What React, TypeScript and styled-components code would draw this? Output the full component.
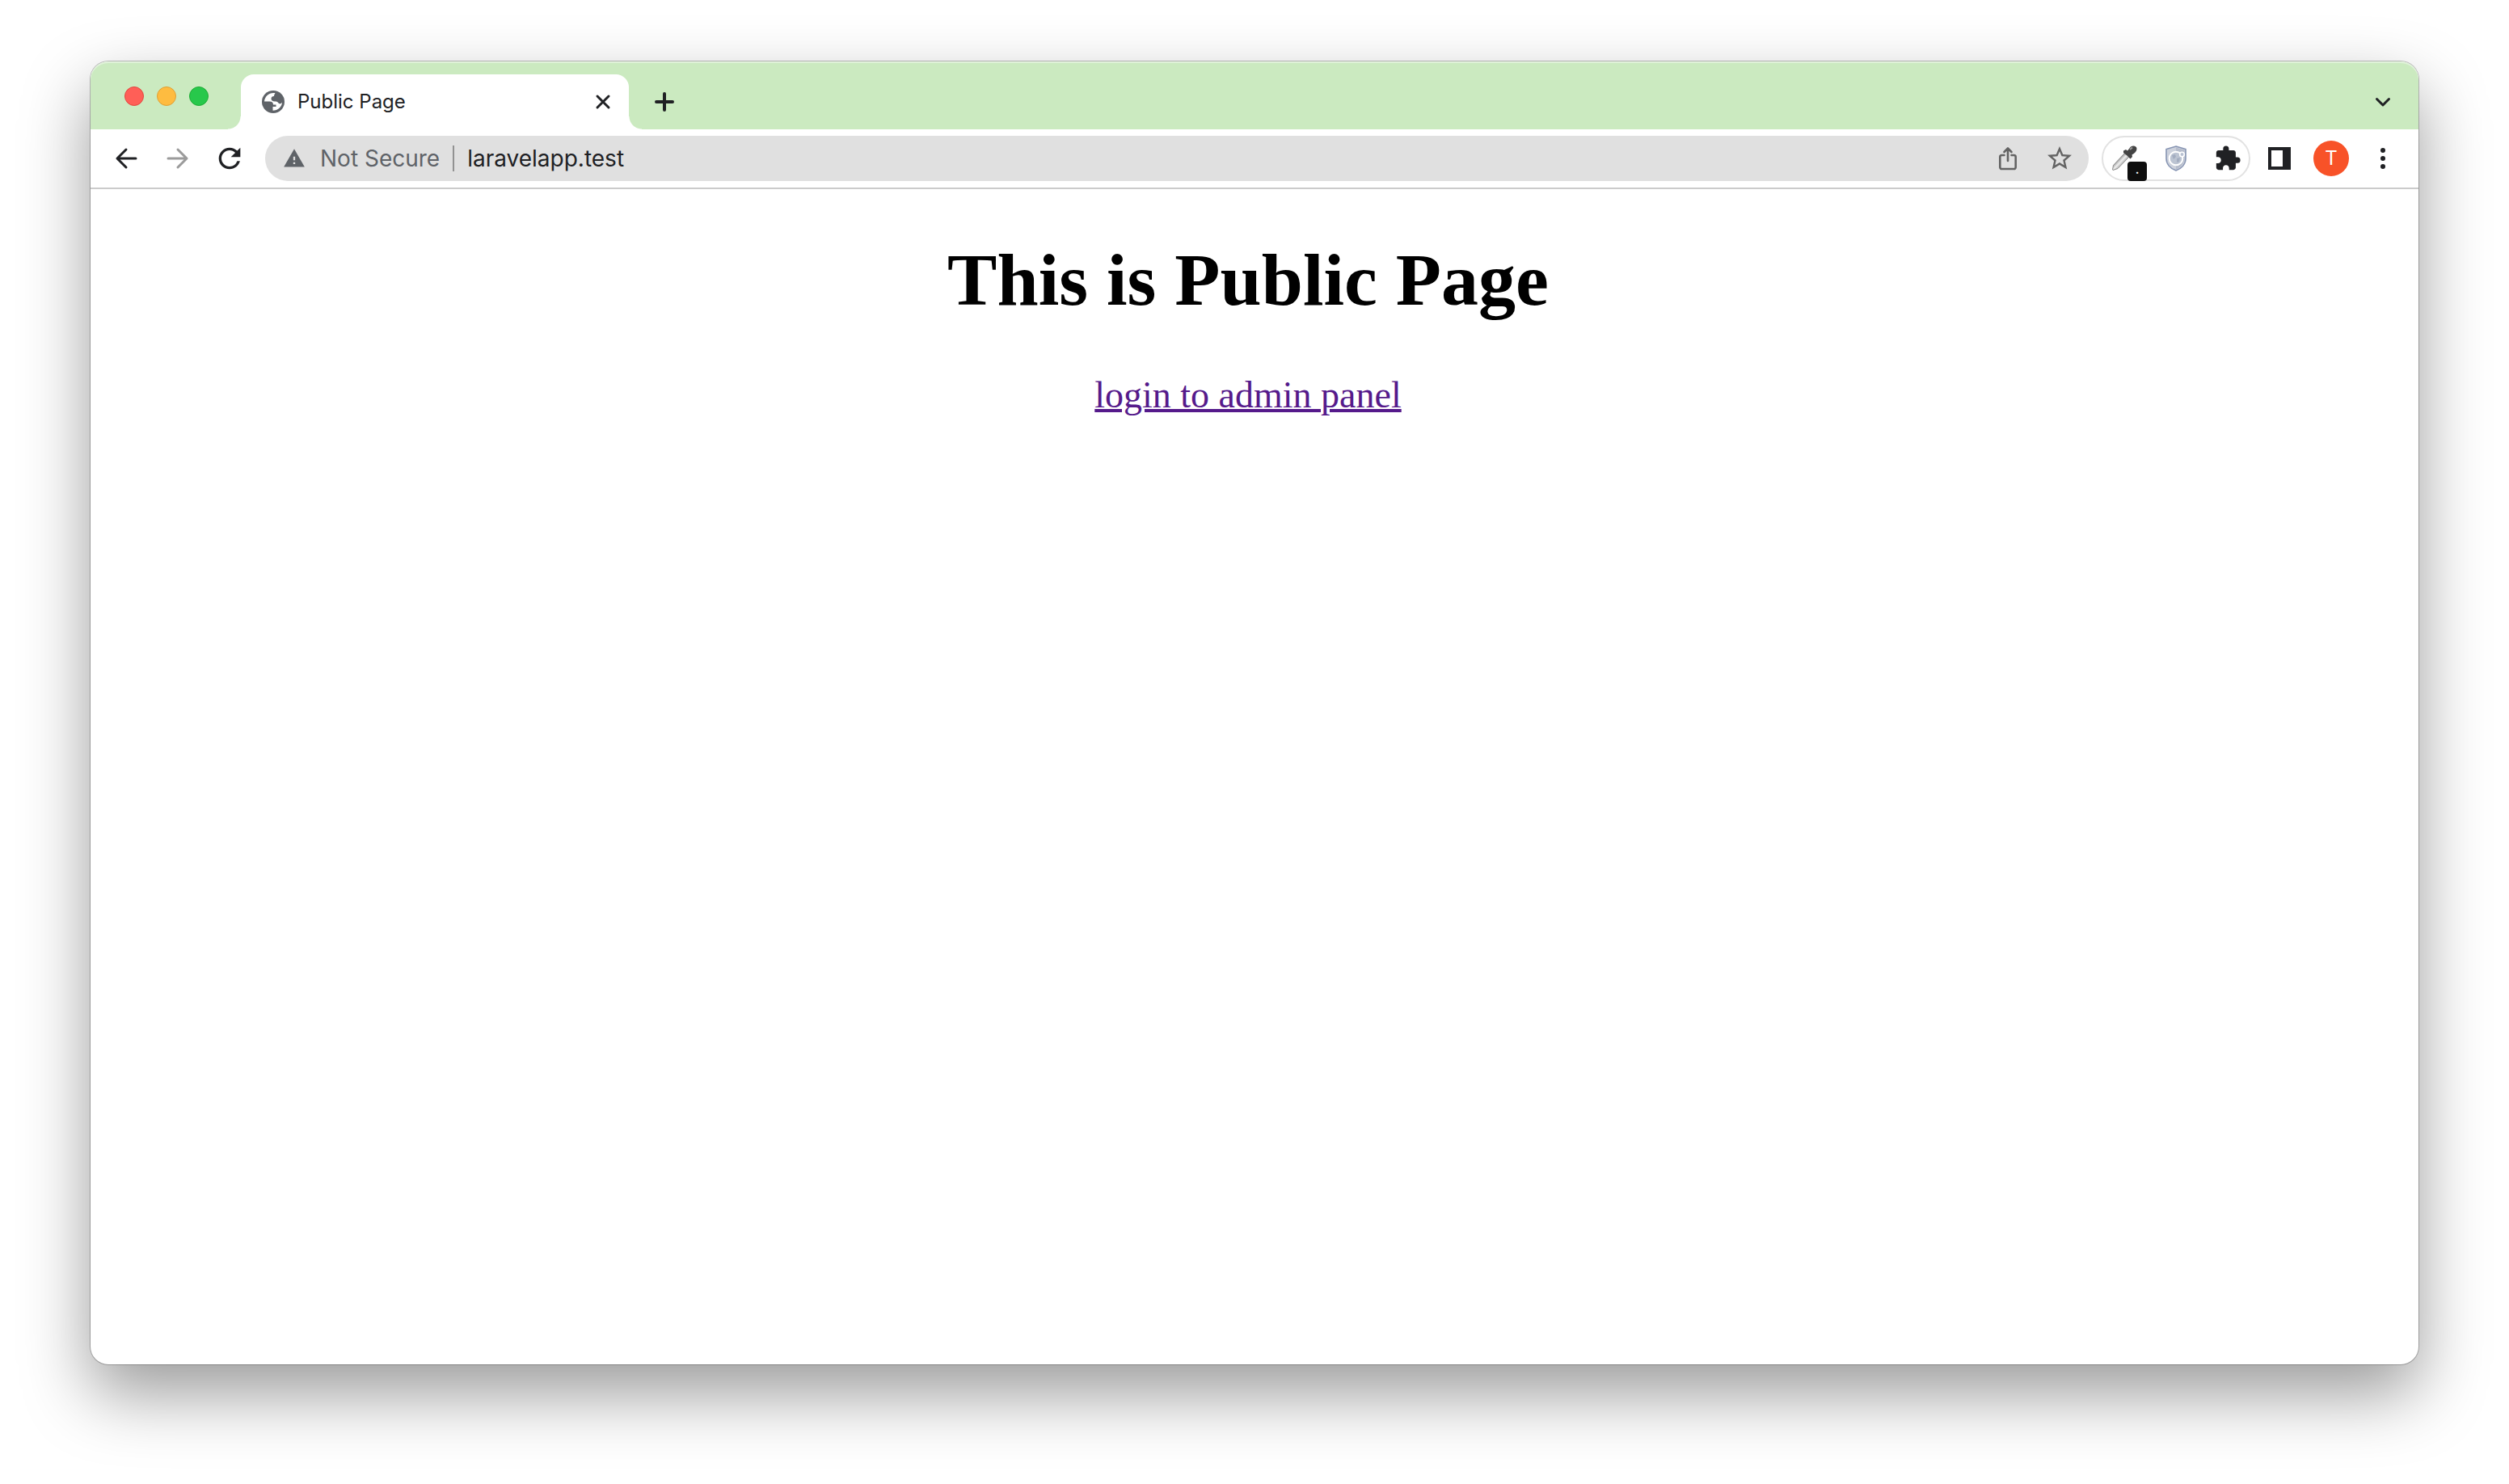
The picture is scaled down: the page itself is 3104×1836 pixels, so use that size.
import React from 'react';
import styled, { createGlobalStyle } from 'styled-components';
import { MdExtension, MdStarBorder, MdWarning, MdRefresh } from 'react-icons/md';

const ink = '#202124';
const muted = '#5f6368';
const frame = '#cbeac0';
const sans = "Inter, 'Liberation Sans', sans-serif";

const GlobalStyle = createGlobalStyle`
  * { box-sizing: border-box; }
  body { margin: 0; background: #fff; }
  button, input { font: inherit; color: inherit; border: 0; margin: 0; padding: 0; background: none; }
  svg { display: block; flex: none; }
`;

const Desktop = styled.div`
  display: flex;
  min-height: 100vh;
  padding: 76px 112px 148px;
`;

const Window = styled.div`
  flex: 1;
  min-width: 0;
  display: flex;
  flex-direction: column;
  border-radius: 22px;
  background: #fff;
  box-shadow: 0 0 0 1px rgba(0, 0, 0, 0.24), 0 36px 84px rgba(0, 0, 0, 0.4);
  font-family: ${sans};
`;

const TabStrip = styled.header`
  display: flex;
  align-items: flex-end;
  height: 84px;
  padding: 0 4px 0 42px;
  border-radius: 22px 22px 0 0;
  background: ${frame};
  box-shadow: inset 0 2px 0 rgba(255, 255, 255, 0.4);
  color: ${ink};
`;

const Lights = styled.div`
  display: flex;
  align-items: center;
  gap: 16px;
  width: 144px;
  height: 82px;
`;

const Light = styled.button<{ $fill: string; $edge: string }>`
  width: 24px;
  height: 24px;
  border-radius: 50%;
  background: ${(p) => p.$fill};
  border: 1px solid ${(p) => p.$edge};
`;

const Tab = styled.div`
  position: relative;
  display: flex;
  align-items: center;
  width: 480px;
  height: 68px;
  padding: 0 16px 0 26px;
  border-radius: 16px 16px 0 0;
  background: #fff;
  font-size: 24px;
  line-height: 32px;

  &::before,
  &::after {
    content: '';
    position: absolute;
    bottom: 0;
    width: 16px;
    height: 16px;
  }
  &::before {
    right: 100%;
    background: radial-gradient(circle at 0 0, transparent 15px, #fff 16px);
  }
  &::after {
    left: 100%;
    background: radial-gradient(circle at 100% 0, transparent 15px, #fff 16px);
  }
`;

const TabTitle = styled.span`
  flex: 1;
  padding-left: 16px;
`;

const IconButton = styled.button<{ $size?: number; $dim?: boolean }>`
  display: flex;
  flex: none;
  align-items: center;
  justify-content: center;
  width: ${(p) => p.$size ?? 64}px;
  height: ${(p) => p.$size ?? 64}px;
  color: ${(p) => (p.$dim ? '#9b9b9b' : ink)};
`;

const StripActions = styled.div`
  flex: 1;
  display: flex;
  justify-content: space-between;
  align-items: center;
  height: 68px;
  padding: 0 12px;
`;

const Toolbar = styled.nav`
  display: flex;
  align-items: center;
  height: 74px;
  padding: 0 12px;
  border-bottom: 2px solid #cbcbcb;
`;

const AddressBar = styled.div`
  flex: 1;
  display: flex;
  align-items: center;
  height: 56px;
  margin: 0 16px 0 12px;
  padding: 0 4px 0 22px;
  border-radius: 28px;
  background: #e0e0e0;
  font-size: 28px;
  line-height: 36px;
`;

const Security = styled.button`
  display: flex;
  align-items: center;
  gap: 18px;
  padding-right: 16px;
  color: ${muted};
`;

const Divider = styled.span`
  width: 2px;
  height: 32px;
  background: #929292;
`;

const Address = styled.input`
  flex: 1;
  min-width: 0;
  height: 40px;
  padding: 0 16px;
  color: ${ink};
`;

const Extensions = styled.div`
  display: flex;
  align-items: center;
  justify-content: center;
  width: 184px;
  height: 56px;
  margin-right: 4px;
  border: 2px solid #e2e2e2;
  border-radius: 28px;
`;

const ExtensionButton = styled(IconButton)`
  position: relative;
  height: 52px;
`;

const Badge = styled.span`
  position: absolute;
  right: 4px;
  bottom: -2px;
  width: 24px;
  height: 24px;
  border-radius: 4px;
  background: #0e0e0e;
  color: #fff;
  font-size: 18px;
  line-height: 18px;
  text-align: center;
`;

const Avatar = styled.span`
  width: 44px;
  height: 44px;
  border-radius: 50%;
  background: #f85228;
  color: #fff;
  font-size: 24px;
  line-height: 44px;
  text-align: center;
`;

const Page = styled.main`
  display: flex;
  flex-direction: column;
  align-items: center;
  gap: 60px;
  padding: 57px 16px 56px 0;
  font-family: 'Liberation Serif', serif;
`;

const Heading = styled.h1`
  margin: 0;
  color: #000;
  font-size: 92px;
  font-weight: 700;
  line-height: 110px;
`;

const LoginLink = styled.a`
  color: #551a8b;
  font-size: 46px;
  line-height: 56px;
  text-decoration: underline;
  text-decoration-thickness: 4px;
`;

const Stroke = ({ d, size, width = 3 }: { d: string; size: number; width?: number }) => (
  <svg width={size} height={size} viewBox={`0 0 ${size} ${size}`} fill="none" stroke="currentColor" strokeWidth={width} strokeLinecap="round" strokeLinejoin="round" aria-hidden="true">
    <path d={d} />
  </svg>
);

const Globe = () => (
  <svg width="28" height="28" viewBox="0 0 28 28" aria-hidden="true">
    <circle cx="14" cy="14" r="14" fill={muted} />
    <path fill="#fff" d="M16.500 3.200C9.500 2 3.500 7 3 13.500H9.500C12.500 13.500 14 15 14 17.500H17.500V20H13.500V24.800C19.500 25 24.800 20.500 25 14.500C24 16.500 22 17 20.500 15.500C19.500 14 18.500 13.500 16 13.500C13 13.500 11.500 12 11.500 10C11.500 8 13 7 15 7C15 5.500 15.500 4.500 16.500 3.200Z" />
  </svg>
);

const Share = () => (
  <svg width="24" height="30" viewBox="0 0 24 30" fill="none" stroke="#636363" strokeWidth="2.600" strokeLinecap="round" strokeLinejoin="round" aria-hidden="true">
    <path d="M7.500 11H4.500A2 2 0 0 0 2.300 13V26A2 2 0 0 0 4.500 28H19.500A2 2 0 0 0 21.700 26V13A2 2 0 0 0 19.500 11H16.500M12 18V3M7.500 7L12 2.500L16.500 7" />
  </svg>
);

const Eyedropper = () => (
  <svg width="32" height="32" viewBox="0 0 32 32" aria-hidden="true">
    <defs>
      <linearGradient id="glass" x1="0" y1="0" x2="1" y2="1">
        <stop offset="0.3" stopColor="#6f6f6f" />
        <stop offset="0.5" stopColor="#f0f0f0" />
        <stop offset="0.7" stopColor="#8a8a8a" />
      </linearGradient>
    </defs>
    <path d="M17 9L22 14L8 28.500L2 30.500L1.500 30L2.500 24.500Z" fill="url(#glass)" stroke="#8b8b8b" strokeWidth="1" />
    <path d="M15 6.500L18 5L20 6.500L24 1.500C27 -0.500 31.500 0.500 31.500 4C31.500 7 29 9.500 25.500 11.500L26 14L23.500 16.500L20 13L15 9Z" fill="#444" />
    <path d="M23 5L26 2.500" stroke="#999" strokeWidth="2" />
  </svg>
);

const Shield = () => (
  <svg width="26" height="32" viewBox="0 0 26 32" aria-hidden="true">
    <path d="M13 1L25 4.500V16C25 23 20 28.500 13 31C6 28.500 1 23 1 16V4.500Z" fill="#ccd1dc" stroke="#8795b3" strokeWidth="1.600" />
    <path d="M13 2.500V29.500C19 27 23.500 22 23.500 16V5.500Z" fill="#b6bdcc" />
    <circle cx="13" cy="16" r="8.300" fill="#bcc4d2" stroke="#fff" strokeWidth="2" />
    <path d="M8 12L12 11L13 14L10 17ZM14 16L18 15L17 20L14 21Z" fill="#a3adc0" />
    <circle cx="20.500" cy="11" r="2.800" fill="#b8c1d1" stroke="#fff" strokeWidth="1.600" />
  </svg>
);

const SidePanel = () => (
  <svg width="28" height="28" viewBox="0 0 28 28" aria-hidden="true">
    <path fill="currentColor" fillRule="evenodd" d="M0 0H28V28H0ZM4 4V24H18V4Z" />
  </svg>
);

const Kebab = () => (
  <svg width="6" height="26" viewBox="0 0 6 26" fill="currentColor" aria-hidden="true">
    <circle cx="3" cy="3" r="3" />
    <circle cx="3" cy="13" r="3" />
    <circle cx="3" cy="23" r="3" />
  </svg>
);

const lights = [
  { label: 'Close window', fill: '#ff5f57', edge: '#e2463f' },
  { label: 'Minimize window', fill: '#febc40', edge: '#dfa035' },
  { label: 'Zoom window', fill: '#27c84b', edge: '#1dac34' },
];

export default function App() {
  return (
    <>
      <GlobalStyle />
      <Desktop>
        <Window>
          <TabStrip>
            <Lights>
              {lights.map((l) => (
                <Light key={l.label} aria-label={l.label} $fill={l.fill} $edge={l.edge} />
              ))}
            </Lights>
            <Tab>
              <Globe />
              <TabTitle>Public Page</TabTitle>
              <IconButton $size={32} aria-label="Close tab">
                <Stroke size={20} d="M3 3L17 17M17 3L3 17" />
              </IconButton>
            </Tab>
            <StripActions>
              <IconButton aria-label="New tab">
                <Stroke size={24} width={4} d="M12 2V22M2 12H22" />
              </IconButton>
              <IconButton $size={56} aria-label="Search tabs">
                <Stroke size={20} d="M2.500 6.500L10 14L17.500 6.500" />
              </IconButton>
            </StripActions>
          </TabStrip>
          <Toolbar aria-label="Browser toolbar">
            <IconButton aria-label="Back">
              <Stroke size={28} d="M26 14H3M14 3L3 14L14 25" />
            </IconButton>
            <IconButton $dim aria-label="Forward">
              <Stroke size={28} d="M2 14H25M14 3L25 14L14 25" />
            </IconButton>
            <IconButton aria-label="Reload">
              <MdRefresh size={40} />
            </IconButton>
            <AddressBar>
              <Security>
                <MdWarning size={28} />
                Not Secure
              </Security>
              <Divider />
              <Address aria-label="Address" defaultValue="laravelapp.test" />
              <IconButton aria-label="Share">
                <Share />
              </IconButton>
              <IconButton aria-label="Bookmark this page">
                <MdStarBorder size={36} color="#636363" />
              </IconButton>
            </AddressBar>
            <Extensions>
              <ExtensionButton aria-label="Color picker">
                <Eyedropper />
                <Badge>.</Badge>
              </ExtensionButton>
              <ExtensionButton aria-label="Privacy shield">
                <Shield />
              </ExtensionButton>
              <ExtensionButton aria-label="Extensions">
                <MdExtension size={34} />
              </ExtensionButton>
            </Extensions>
            <IconButton aria-label="Side panel">
              <SidePanel />
            </IconButton>
            <IconButton aria-label="Profile">
              <Avatar>T</Avatar>
            </IconButton>
            <IconButton aria-label="Browser menu">
              <Kebab />
            </IconButton>
          </Toolbar>
          <Page>
            <Heading>This is Public Page</Heading>
            <LoginLink href="#login">login to admin panel</LoginLink>
          </Page>
        </Window>
      </Desktop>
    </>
  );
}
